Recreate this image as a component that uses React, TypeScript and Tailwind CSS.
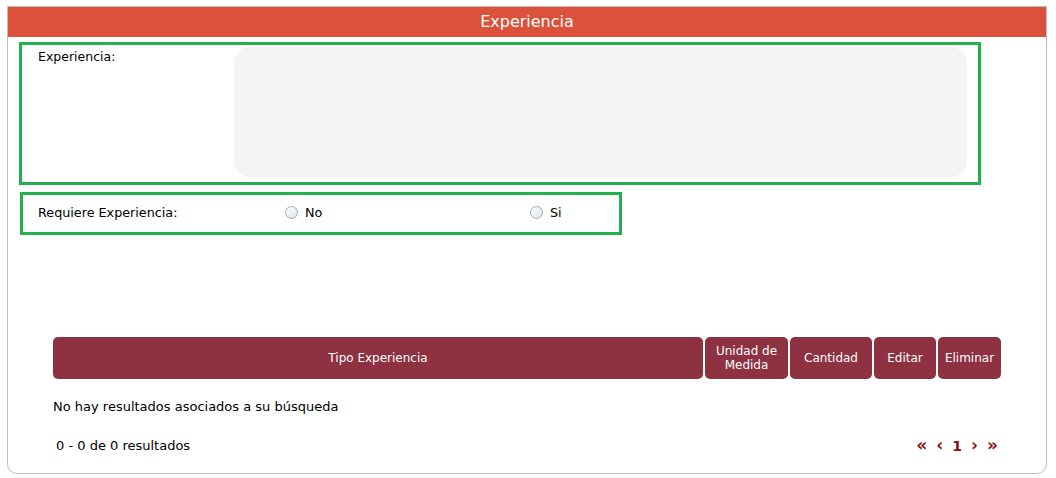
import React from "react";

function Radio({ label }: { label: string }) {
  return (
    <label className="flex items-center gap-[7px]">
      <span className="w-[13px] h-[13px] rounded-full border border-[#a3abb9] bg-gradient-to-br from-[#ffffff] to-[#dde2ea]" />
      <span>{label}</span>
    </label>
  );
}

const cols = [
  { label: "Tipo Experiencia", w: "w-[650px]" },
  { label: "Unidad de Medida", w: "w-[83px]" },
  { label: "Cantidad", w: "w-[82px]" },
  { label: "Editar", w: "w-[62px]" },
  { label: "Eliminar", w: "w-[63px]" },
];

export default function App() {
  return (
    <div className="w-[1056px] h-[478px] bg-white pt-[6px] pl-[7px] font-['DejaVu_Sans',Verdana,sans-serif] text-[13px] text-black">
      <div className="w-[1040px] h-[468px] border border-[#bdbdbd] rounded-b-[10px] flex flex-col">
        <div className="h-[30px] bg-[#dc513b] text-white text-[16px] flex items-center justify-center">
          Experiencia
        </div>

        <div className="ml-[11px] mt-[5px] w-[962px] h-[143px] border-[3px] border-[#22b14c] flex">
          <div className="w-[212px] pl-[16px] pt-[4px] leading-[16px] text-[12.5px]">Experiencia:</div>
          <div className="mt-[2px] w-[733px] h-[130px] rounded-[16px] bg-[#f4f4f4]" />
        </div>

        <div className="ml-[12px] mt-[7px] w-[602px] h-[43px] border-[3px] border-[#22b14c] flex items-center text-[12.75px] pb-[2px]">
          <div className="w-[262px] pl-[15px]">Requiere Experiencia:</div>
          <div className="w-[245px]">
            <Radio label="No" />
          </div>
          <Radio label="Si" />
        </div>

        <div className="ml-[45px] mt-[102px] w-[948px] flex gap-[2px] text-white text-[12px]">
          {cols.map((c) => (
            <div
              key={c.label}
              className={`${c.w} h-[42px] rounded-[5px] bg-[#8e3140] flex items-center justify-center text-center leading-[14px] px-[6px]`}
            >
              {c.label}
            </div>
          ))}
        </div>

        <div className="ml-[45px] mt-[18px]">No hay resultados asociados a su búsqueda</div>

        <div className="ml-[48px] mt-[19px] w-[942px] flex items-center justify-between">
          <span>0 - 0 de 0 resultados</span>
          <div className="flex items-center gap-[9px] text-[#8b0a0a] font-bold text-[17px] leading-none">
            <span>«</span>
            <span>‹</span>
            <span className="text-[14px] pt-[2px]">1</span>
            <span>›</span>
            <span>»</span>
          </div>
        </div>
      </div>
    </div>
  );
}
